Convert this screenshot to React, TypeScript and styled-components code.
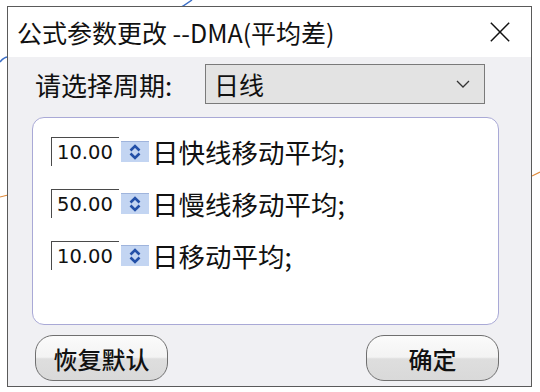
import React from "react";
import styled, { createGlobalStyle } from "styled-components";

const GlobalStyle = createGlobalStyle`
  html, body {
    margin: 0;
    padding: 0;
    background: #ffffff;
  }
  body {
    width: 540px;
    height: 392px;
    overflow: hidden;
    font-family: "Noto Sans CJK SC", "Noto Sans", sans-serif;
  }
`;

const params = [
  { value: "10.00", label: "日快线移动平均;" },
  { value: "50.00", label: "日慢线移动平均;" },
  { value: "10.00", label: "日移动平均;" },
];

export default function App() {
  return (
    <>
      <GlobalStyle />
      <Page>
        <Backdrop viewBox="0 0 540 392" aria-hidden>
          <path d="M176 10 C184 6 188 3 192 0" stroke="#3d6fc6" strokeWidth="1.5" fill="none" />
          <path d="M0 62 C3 58 6 57 8 57" stroke="#3d6fc6" strokeWidth="1.5" fill="none" />
          <path d="M0 197 L8 195" stroke="#e08a3a" strokeWidth="1.2" fill="none" />
          <path d="M532 176 L540 172" stroke="#e08a3a" strokeWidth="1.2" fill="none" />
        </Backdrop>
        <Window>
          <TitleBar>
            <Title>公式参数更改 --DMA(平均差)</Title>
            <CloseIcon viewBox="0 0 24 24">
              <path d="M2 2 L22 22 M22 2 L2 22" stroke="#111" strokeWidth="1.6" />
            </CloseIcon>
          </TitleBar>
          <Body>
            <PeriodRow>
              <PeriodLabel>请选择周期:</PeriodLabel>
              <Select>
                <span>日线</span>
                <Chevron viewBox="0 0 14 8">
                  <path d="M1 1 L7 7 L13 1" stroke="#333" strokeWidth="1.3" fill="none" />
                </Chevron>
              </Select>
            </PeriodRow>
            <GroupBox>
              {params.map((p, i) => (
                <ParamRow key={i}>
                  <NumberField>{p.value}</NumberField>
                  <SpinButton>
                    <svg width="14" height="18" viewBox="0 0 14 18">
                      <path d="M2.5 7.5 L7 3 L11.5 7.5" stroke="#2350a8" strokeWidth="2.6" fill="none" />
                      <path d="M2.5 10.5 L7 15 L11.5 10.5" stroke="#2350a8" strokeWidth="2.6" fill="none" />
                    </svg>
                  </SpinButton>
                  <ParamLabel>{p.label}</ParamLabel>
                </ParamRow>
              ))}
            </GroupBox>
            <ButtonRow>
              <PillButton>恢复默认</PillButton>
              <PillButton>确定</PillButton>
            </ButtonRow>
          </Body>
        </Window>
      </Page>
    </>
  );
}

const Page = styled.div`
  position: relative;
  width: 540px;
  height: 392px;
  padding: 6px 0 0 7px;
  box-sizing: border-box;
`;

const Backdrop = styled.svg`
  position: absolute;
  left: 0;
  top: 0;
  width: 540px;
  height: 392px;
`;

const Window = styled.div`
  position: relative;
  width: 525px;
  height: 381px;
  border: 1px solid #5a5a5a;
  box-sizing: border-box;
  display: flex;
  flex-direction: column;
  background: #f0f0f3;
`;

const TitleBar = styled.div`
  height: 50px;
  flex-shrink: 0;
  background: #ffffff;
  display: flex;
  align-items: center;
  justify-content: space-between;
  padding: 0 20px 0 9px;
`;

const Title = styled.div`
  font-size: 25px;
  color: #111;
`;

const CloseIcon = styled.svg`
  width: 22px;
  height: 22px;
`;

const Body = styled.div`
  flex: 1;
  display: flex;
  flex-direction: column;
  padding: 7px 32px 0 24px;
`;

const PeriodRow = styled.div`
  display: flex;
  align-items: center;
  height: 40px;
`;

const PeriodLabel = styled.div`
  width: 170px;
  padding-left: 3px;
  font-size: 26px;
  font-weight: 400;
  color: #111;
`;

const Select = styled.div`
  width: 280px;
  height: 40px;
  box-sizing: border-box;
  border: 1px solid #7a7a7a;
  background: #e3e3e3;
  display: flex;
  align-items: center;
  justify-content: space-between;
  padding: 0 14px 0 8px;
  font-size: 25px;
  color: #111;
`;

const Chevron = styled.svg`
  width: 14px;
  height: 8px;
`;

const GroupBox = styled.div`
  margin-top: 13px;
  height: 208px;
  box-sizing: border-box;
  border: 1px solid #a9a9d6;
  border-radius: 12px;
  background: #ffffff;
  padding: 19px 0 0 18px;
  display: flex;
  flex-direction: column;
  gap: 23px;
`;

const ParamRow = styled.div`
  display: flex;
  align-items: center;
  height: 29px;
`;

const NumberField = styled.div`
  width: 68px;
  height: 29px;
  box-sizing: border-box;
  border-top: 1px solid #4a4a4a;
  border-left: 1px solid #4a4a4a;
  padding: 2px 0 0 5px;
  font-family: "DejaVu Sans", Verdana, sans-serif;
  font-size: 19.5px;
  line-height: 25px;
  color: #111;
`;

const SpinButton = styled.div`
  width: 28px;
  height: 21px;
  margin-left: 2px;
  box-sizing: border-box;
  background: #c3d5f2;
  border-top: 1px solid #9fb4dc;
  display: flex;
  align-items: center;
  justify-content: center;
`;

const ParamLabel = styled.div`
  margin-left: 3px;
  font-size: 26.5px;
  color: #111;
`;

const ButtonRow = styled.div`
  margin-top: 10px;
  display: flex;
  justify-content: space-between;
  padding: 0 0 0 3px;
`;

const PillButton = styled.button`
  width: 133px;
  height: 46px;
  box-sizing: border-box;
  border: 1px solid #6f6f6f;
  border-radius: 18px;
  background: linear-gradient(#fbfbfb 0%, #f3f3f3 48%, #dedede 52%, #d9d9d9 100%);
  font-family: "Noto Sans CJK SC", "Noto Sans", sans-serif;
  font-size: 24px;
  font-weight: 500;
  color: #111;
  padding: 0;
`;
